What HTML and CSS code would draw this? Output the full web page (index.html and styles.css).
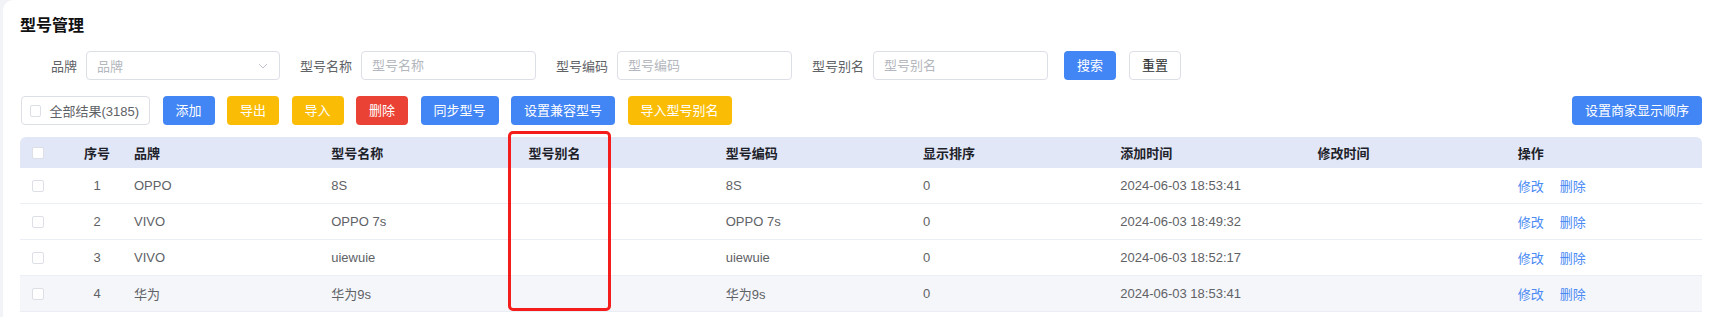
FILE: index.html
```html
<!DOCTYPE html>
<html lang="zh-CN">
<head>
<meta charset="utf-8">
<title>型号管理</title>
<link rel="stylesheet" href="styles.css">
</head>
<body>
<div class="card">
  <h1 class="title">型号管理</h1>

  <div class="filters">
    <div class="field">
      <label>品牌</label>
      <div class="control select"><span class="ph">品牌</span>
        <svg class="chev" width="10" height="6" viewBox="0 0 10 6"><path d="M1 1 L5 5 L9 1" fill="none" stroke="#c0c4cc" stroke-width="1"/></svg>
      </div>
    </div>
    <div class="field">
      <label>型号名称</label>
      <input class="control input" placeholder="型号名称">
    </div>
    <div class="field">
      <label>型号编码</label>
      <input class="control input" placeholder="型号编码">
    </div>
    <div class="field last">
      <label>型号别名</label>
      <input class="control input" placeholder="型号别名">
    </div>
    <button class="btn blue">搜索</button>
    <button class="btn plain">重置</button>
  </div>

  <div class="toolbar">
    <div class="tb-left">
      <label class="all"><span class="cb"></span><span>全部结果(3185)</span></label>
      <button class="btn blue">添加</button>
      <button class="btn yellow">导出</button>
      <button class="btn yellow">导入</button>
      <button class="btn red">删除</button>
      <button class="btn blue">同步型号</button>
      <button class="btn blue">设置兼容型号</button>
      <button class="btn yellow">导入型号别名</button>
    </div>
    <button class="btn blue">设置商家显示顺序</button>
  </div>

  <div class="table">
    <div class="row head">
      <div class="c0"><span class="cb"></span></div>
      <div class="c1">序号</div>
      <div class="c">品牌</div>
      <div class="c">型号名称</div>
      <div class="c">型号别名</div>
      <div class="c">型号编码</div>
      <div class="c">显示排序</div>
      <div class="c">添加时间</div>
      <div class="c">修改时间</div>
      <div class="c op">操作</div>
    </div>
    <div class="row">
      <div class="c0"><span class="cb"></span></div>
      <div class="c1">1</div>
      <div class="c">OPPO</div>
      <div class="c">8S</div>
      <div class="c"></div>
      <div class="c">8S</div>
      <div class="c">0</div>
      <div class="c">2024-06-03 18:53:41</div>
      <div class="c"></div>
      <div class="c op"><a class="link">修改</a><a class="link">删除</a></div>
    </div>
    <div class="row">
      <div class="c0"><span class="cb"></span></div>
      <div class="c1">2</div>
      <div class="c">VIVO</div>
      <div class="c">OPPO 7s</div>
      <div class="c"></div>
      <div class="c">OPPO 7s</div>
      <div class="c">0</div>
      <div class="c">2024-06-03 18:49:32</div>
      <div class="c"></div>
      <div class="c op"><a class="link">修改</a><a class="link">删除</a></div>
    </div>
    <div class="row">
      <div class="c0"><span class="cb"></span></div>
      <div class="c1">3</div>
      <div class="c">VIVO</div>
      <div class="c">uiewuie</div>
      <div class="c"></div>
      <div class="c">uiewuie</div>
      <div class="c">0</div>
      <div class="c">2024-06-03 18:52:17</div>
      <div class="c"></div>
      <div class="c op"><a class="link">修改</a><a class="link">删除</a></div>
    </div>
    <div class="row alt">
      <div class="c0"><span class="cb"></span></div>
      <div class="c1">4</div>
      <div class="c">华为</div>
      <div class="c">华为9s</div>
      <div class="c"></div>
      <div class="c">华为9s</div>
      <div class="c">0</div>
      <div class="c">2024-06-03 18:53:41</div>
      <div class="c"></div>
      <div class="c op"><a class="link">修改</a><a class="link">删除</a></div>
    </div>
    <div class="highlight"></div>
  </div>
</div>
</body>
</html>
```

FILE: styles.css
```css
* { box-sizing: border-box; }
html, body { margin: 0; padding: 0; }
body {
  background: #f2f3f7;
  font-family: "Liberation Sans", "Noto Sans CJK SC", sans-serif;
  font-size: 13px;
  color: #606266;
  overflow: hidden;
}
.card {
  margin-left: 3px;
  background: #fff;
  border-top-left-radius: 10px;
  padding: 15px 10px 10px 17px;
  min-height: 317px;
}
.title {
  margin: 0;
  font-size: 16px;
  line-height: 22px;
  font-weight: 700;
  color: #111;
}

/* filters */
.filters {
  display: flex;
  align-items: center;
  margin-top: 14px;
  padding-left: 31px;
  height: 29px;
}
.field {
  display: flex;
  align-items: center;
  margin-right: 20px;
}
.field.last { margin-right: 16px; }
.field label {
  margin-right: 9px;
  color: #606266;
  white-space: nowrap;
}
.control {
  height: 29px;
  border: 1px solid #dcdfe6;
  border-radius: 4px;
  padding: 0 10px;
  display: flex;
  align-items: center;
  color: #b4b7bd;
  font: inherit;
  background: #fff;
  outline: none;
}
.control::placeholder { color: #b4b7bd; }
.select { width: 194px; justify-content: space-between; padding-right: 11px; }
.input { width: 175px; }

/* buttons */
.btn {
  height: 29px;
  padding: 0 13px;
  border: none;
  border-radius: 4px;
  color: #fff;
  font: inherit;
  line-height: 29px;
  white-space: nowrap;
  cursor: pointer;
}
.btn.blue { background: #4285f4; }
.btn.yellow { background: #fbbc05; }
.btn.red { background: #ea4335; }
.btn.plain {
  background: #fff;
  border: 1px solid #dcdfe6;
  color: #303133;
  padding: 0 12px;
  line-height: 27px;
  margin-left: 13px;
}

/* toolbar */
.toolbar {
  display: flex;
  justify-content: space-between;
  align-items: center;
  margin-top: 16px;
}
.tb-left {
  display: flex;
  align-items: center;
  gap: 12.5px;
}
.all {
  display: flex;
  align-items: center;
  height: 29px;
  width: 129px;
  margin-left: 1px;
  padding: 0 10px 0 8px;
  border: 1px solid #dcdfe6;
  border-radius: 4px;
  color: #606266;
  white-space: nowrap;
}
.all .cb { margin-right: 8px; }
.cb {
  display: inline-block;
  width: 12px;
  height: 12px;
  border: 1px solid #dcdfe6;
  border-radius: 2px;
  background: #fff;
}

/* table */
.table {
  position: relative;
  margin-top: 12px;
}
.row {
  display: grid;
  grid-template-columns: 50px 54px repeat(8, 1fr);
  height: 36px;
  align-items: center;
  border-bottom: 1px solid #ebeef5;
}
.row.head {
  height: 31px;
  background: #e1e7f6;
  border-bottom: none;
  border-radius: 6px 6px 0 0;
  color: #1d2129;
  font-weight: 700;
}
.row.alt { background: #f5f6fa; }
.c0 { padding-left: 12px; display: flex; align-items: center; }
.c1 { text-align: center; }
.c { padding-left: 10px; white-space: nowrap; }
.c.op { padding-left: 13px; }
.link { color: #4a8af4; cursor: pointer; }
.link + .link { margin-left: 16px; }

.highlight {
  position: absolute;
  left: 488px;
  top: -6px;
  width: 103px;
  height: 180px;
  border: 3px solid #f51c1c;
  border-radius: 5px;
  pointer-events: none;
}
```
